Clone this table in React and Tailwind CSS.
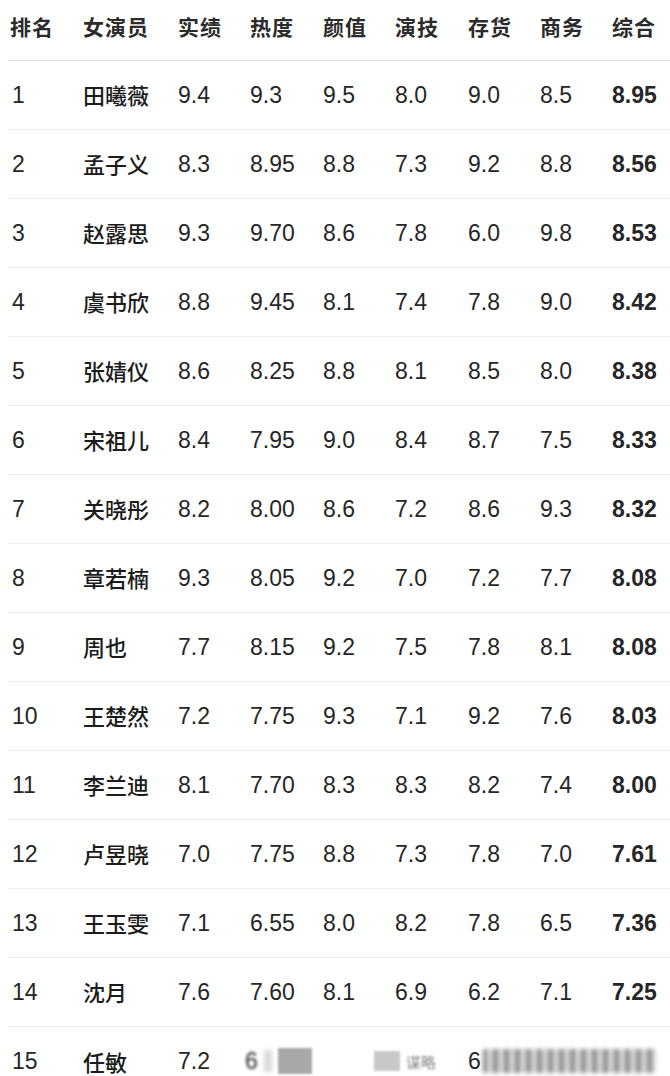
const rows = [
  ['1', '田曦薇', '9.4', '9.3', '9.5', '8.0', '9.0', '8.5', '8.95'],
  ['2', '孟子义', '8.3', '8.95', '8.8', '7.3', '9.2', '8.8', '8.56'],
  ['3', '赵露思', '9.3', '9.70', '8.6', '7.8', '6.0', '9.8', '8.53'],
  ['4', '虞书欣', '8.8', '9.45', '8.1', '7.4', '7.8', '9.0', '8.42'],
  ['5', '张婧仪', '8.6', '8.25', '8.8', '8.1', '8.5', '8.0', '8.38'],
  ['6', '宋祖儿', '8.4', '7.95', '9.0', '8.4', '8.7', '7.5', '8.33'],
  ['7', '关晓彤', '8.2', '8.00', '8.6', '7.2', '8.6', '9.3', '8.32'],
  ['8', '章若楠', '9.3', '8.05', '9.2', '7.0', '7.2', '7.7', '8.08'],
  ['9', '周也', '7.7', '8.15', '9.2', '7.5', '7.8', '8.1', '8.08'],
  ['10', '王楚然', '7.2', '7.75', '9.3', '7.1', '9.2', '7.6', '8.03'],
  ['11', '李兰迪', '8.1', '7.70', '8.3', '8.3', '8.2', '7.4', '8.00'],
  ['12', '卢昱晓', '7.0', '7.75', '8.8', '7.3', '7.8', '7.0', '7.61'],
  ['13', '王玉雯', '7.1', '6.55', '8.0', '8.2', '7.8', '6.5', '7.36'],
  ['14', '沈月', '7.6', '7.60', '8.1', '6.9', '6.2', '7.1', '7.25'],
]

const headers = ['排名', '女演员', '实绩', '热度', '颜值', '演技', '存货', '商务', '综合']

const grid = 'grid grid-cols-[73px_95px_72px_73px_72px_73px_72px_72px_1fr] items-center ml-[8px] pl-[2px]'
const num = "font-['Liberation_Sans','Noto_Sans_CJK_SC',sans-serif] text-[23px] leading-[28px] text-[#262626]"
const cjk = "font-['Noto_Sans_CJK_SC',sans-serif] leading-none"

export default function App() {
  return (
    <div className="w-[670px] h-[1076px] overflow-hidden bg-white">
      <div className={`${grid} h-[61px] pb-[7px] border-b border-[#dcdcdc]`}>
        {headers.map((h) => (
          <div key={h} className={`${cjk} text-[21px] font-semibold text-[#2b2b2b] tracking-[1px]`}>
            {h}
          </div>
        ))}
      </div>

      {rows.map((r) => (
        <div key={r[0]} className={`${grid} h-[69px] border-b border-[#ededed]`}>
          <div className={`${num} pl-[2px]`}>{r[0]}</div>
          <div className={`${cjk} text-[22px] font-medium text-[#1c1c1c] mb-[2px]`}>{r[1]}</div>
          {r.slice(2, 8).map((v, i) => (
            <div key={i} className={num}>{v}</div>
          ))}
          <div className={`${num} font-bold text-[#161616]`}>{r[8]}</div>
        </div>
      ))}

      <div className={`${grid} h-[49px] pt-[19px]`}>
        <div className={`${num} pl-[2px]`}>15</div>
        <div className={`${cjk} text-[22px] font-medium text-[#1c1c1c]`}>任敏</div>
        <div className={num}>7.2</div>
        <div className="col-span-3 flex items-center gap-[6px] -ml-[5px]">
          <span className={`${num} text-[#9a9a9a] blur-[1.5px]`}>6</span>
          <span className="w-[8px] h-[22px] bg-[#d9d9d9] blur-[2px]" />
          <span className="w-[34px] h-[26px] bg-[#a8a8a8] blur-[1px]" />
          <span className="w-[50px]" />
          <span className="w-[26px] h-[20px] bg-[#c8c8c8] blur-[1px]" />
          <span className={`${cjk} text-[15px] text-[#888] blur-[1px]`}>谋略</span>
        </div>
        <div className="col-span-3 flex items-center">
          <span className={num}>6</span>
          <span className="flex-1 h-[24px] ml-[2px] mr-[14px] bg-[repeating-linear-gradient(90deg,#4a4a4a_0px,#8a8a8a_3px,#e0e0e0_7px,#9a9a9a_11px)] blur-[2px] opacity-80" />
        </div>
      </div>
    </div>
  )
}
